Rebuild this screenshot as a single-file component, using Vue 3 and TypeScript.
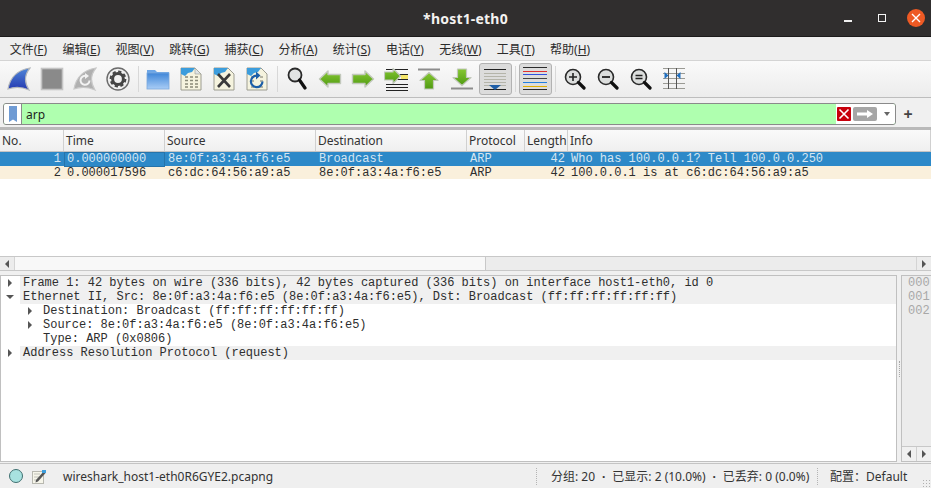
<script setup lang="ts">
interface MenuItem {
  label: string
  key: string
}

interface Packet {
  no: number
  time: string
  source: string
  destination: string
  protocol: string
  length: number
  info: string
}

interface DetailRow {
  text: string
  level: number
  arrow: 'right' | 'down' | 'none'
  shaded: boolean
}

const menus: MenuItem[] = [
  { label: '文件', key: 'F' },
  { label: '编辑', key: 'E' },
  { label: '视图', key: 'V' },
  { label: '跳转', key: 'G' },
  { label: '捕获', key: 'C' },
  { label: '分析', key: 'A' },
  { label: '统计', key: 'S' },
  { label: '电话', key: 'Y' },
  { label: '无线', key: 'W' },
  { label: '工具', key: 'T' },
  { label: '帮助', key: 'H' }
]

const columns = ['No.', 'Time', 'Source', 'Destination', 'Protocol', 'Length', 'Info']

const packets: Packet[] = [
  {
    no: 1,
    time: '0.000000000',
    source: '8e:0f:a3:4a:f6:e5',
    destination: 'Broadcast',
    protocol: 'ARP',
    length: 42,
    info: 'Who has 100.0.0.1? Tell 100.0.0.250'
  },
  {
    no: 2,
    time: '0.000017596',
    source: 'c6:dc:64:56:a9:a5',
    destination: '8e:0f:a3:4a:f6:e5',
    protocol: 'ARP',
    length: 42,
    info: '100.0.0.1 is at c6:dc:64:56:a9:a5'
  }
]

const details: DetailRow[] = [
  {
    text: 'Frame 1: 42 bytes on wire (336 bits), 42 bytes captured (336 bits) on interface host1-eth0, id 0',
    level: 0,
    arrow: 'right',
    shaded: true
  },
  {
    text: 'Ethernet II, Src: 8e:0f:a3:4a:f6:e5 (8e:0f:a3:4a:f6:e5), Dst: Broadcast (ff:ff:ff:ff:ff:ff)',
    level: 0,
    arrow: 'down',
    shaded: true
  },
  { text: 'Destination: Broadcast (ff:ff:ff:ff:ff:ff)', level: 1, arrow: 'right', shaded: false },
  { text: 'Source: 8e:0f:a3:4a:f6:e5 (8e:0f:a3:4a:f6:e5)', level: 1, arrow: 'right', shaded: false },
  { text: 'Type: ARP (0x0806)', level: 1, arrow: 'none', shaded: false },
  { text: 'Address Resolution Protocol (request)', level: 0, arrow: 'right', shaded: true }
]

// the pane is narrow, only the first three digits of each offset show
const offsets = ['000', '001', '002']
</script>

<template>
  <div class="window">
    <header class="titlebar">
      <span class="title">*host1-eth0</span>
      <div class="win-buttons">
        <span class="win-min"></span>
        <span class="win-max"></span>
        <span class="win-close">
          <svg width="18" height="18" viewBox="0 0 18 18">
            <path d="M5 5l8 8M13 5l-8 8" stroke="#fff" stroke-width="1.4" fill="none" />
          </svg>
        </span>
      </div>
    </header>

    <nav class="menubar">
      <span v-for="menu in menus" :key="menu.key" class="menu-item">{{ menu.label }}(<u>{{ menu.key }}</u>)</span>
    </nav>

    <div class="toolbar">
      <!-- capture -->
      <span class="tool">
        <svg width="24" height="24" viewBox="0 0 24 24">
          <defs>
            <linearGradient id="shark" x1="0" y1="0" x2="0" y2="1">
              <stop offset="0" stop-color="#4f86d8" />
              <stop offset="1" stop-color="#2438b0" />
            </linearGradient>
            <linearGradient id="go" x1="0" y1="0" x2="0" y2="1">
              <stop offset="0" stop-color="#86c832" />
              <stop offset="1" stop-color="#4f9a12" />
            </linearGradient>
          </defs>
          <path d="M1 22C3 11 10 3 23 1 18 7 17 15 22 23 15 20 7 20 1 22Z" fill="url(#shark)" stroke="#b4b8bc" stroke-width="1.2" />
        </svg>
      </span>
      <span class="tool">
        <svg width="24" height="24" viewBox="0 0 24 24">
          <rect x="1.5" y="1.5" width="21" height="21" fill="#8a8a8a" stroke="#c4c4c4" stroke-width="1.6" />
        </svg>
      </span>
      <span class="tool">
        <svg width="24" height="24" viewBox="0 0 24 24">
          <path d="M1 22C3 11 10 3 23 1 18 7 17 15 22 23 15 20 7 20 1 22Z" fill="#b0b0b0" stroke="#c8c8c8" stroke-width="1.2" />
          <path d="M16.5 13.5a4.5 4.5 0 1 1-3-4.4" stroke="#f2f2f2" stroke-width="2" fill="none" />
          <path d="M12 6l4 3-4 3Z" fill="#f2f2f2" />
        </svg>
      </span>
      <span class="tool">
        <svg width="24" height="24" viewBox="0 0 24 24">
          <circle cx="12" cy="12" r="11" fill="#f0f0f0" stroke="#6c6c6c" stroke-width="1.4" />
          <circle cx="12" cy="12" r="5.4" fill="none" stroke="#444" stroke-width="3" />
          <circle cx="12" cy="12" r="7.4" fill="none" stroke="#444" stroke-width="2" stroke-dasharray="3.3 2.5" />
        </svg>
      </span>
      <span class="tool-sep"></span>

      <!-- files -->
      <span class="tool">
        <svg width="24" height="22" viewBox="0 0 24 22">
          <defs>
            <linearGradient id="folder" x1="0" y1="0" x2="0" y2="1">
              <stop offset="0" stop-color="#3f86d8" />
              <stop offset="1" stop-color="#a9cdf6" />
            </linearGradient>
          </defs>
          <path d="M1 2h8l2 2h12v3H1Z" fill="#6da6e6" />
          <rect x="1" y="5" width="22" height="16" fill="url(#folder)" stroke="#7aa9dd" stroke-width="0.8" />
        </svg>
      </span>
      <span class="tool">
        <svg width="22" height="24" viewBox="0 0 22 24">
          <path d="M1 1h14l6 6v16H1Z" fill="#f5f3de" stroke="#9c9c90" />
          <path d="M1 1h14l-3 4-4 1-3 3-4-2Z" fill="#3c9ddc" />
          <path d="M15 1v6h6Z" fill="#dfe4e6" stroke="#9c9c90" stroke-width="0.6" />
          <path d="M5 10h3M10 10h3M15 10h3M5 13.5h3M10 13.5h3M15 13.5h3M5 17h3M10 17h3M15 17h3M5 20h3M10 20h3M15 20h3" stroke="#8a8a78" stroke-width="1.6" />
        </svg>
      </span>
      <span class="tool">
        <svg width="22" height="24" viewBox="0 0 22 24">
          <path d="M1 1h14l6 6v16H1Z" fill="#f5f3de" stroke="#9c9c90" />
          <path d="M1 1h14l-3 4-4 1-3 3-4-2Z" fill="#3c9ddc" />
          <path d="M5 7l12 13M17 7L5 20" stroke="#3a3a3a" stroke-width="2.6" />
        </svg>
      </span>
      <span class="tool">
        <svg width="22" height="24" viewBox="0 0 22 24">
          <path d="M1 1h14l6 6v16H1Z" fill="#f5f3de" stroke="#9c9c90" />
          <path d="M1 1h14l-3 4-4 1-3 3-4-2Z" fill="#3c9ddc" />
          <path d="M5 10h3M14 10h3M5 14h3M14 14h3M5 20h3M14 20h3" stroke="#a0a090" stroke-width="1.6" />
          <path d="M16.5 14.5A5.8 5.8 0 1 1 11 8.6" stroke="#1c5ea8" stroke-width="2.2" fill="none" />
          <path d="M10 4.5l4.5 4-4.5 4Z" fill="#1c5ea8" />
        </svg>
      </span>
      <span class="tool-sep"></span>

      <!-- find and go -->
      <span class="tool">
        <svg width="20" height="24" viewBox="0 0 20 24">
          <circle cx="8" cy="8" r="6.5" fill="#e2e4e4" stroke="#2a2a2a" stroke-width="1.8" />
          <path d="M12.5 13L18 21" stroke="#111" stroke-width="3.2" stroke-linecap="round" />
        </svg>
      </span>
      <span class="tool">
        <svg width="24" height="18" viewBox="0 0 24 18">
          <path d="M1.5 9L10 1V4.5H22.5V13.5H10V17Z" fill="url(#go)" stroke="#c2c8bc" stroke-width="1.4" stroke-linejoin="round" />
        </svg>
      </span>
      <span class="tool">
        <svg width="24" height="18" viewBox="0 0 24 18">
          <path d="M22.5 9L14 1V4.5H1.5V13.5H14V17Z" fill="url(#go)" stroke="#c2c8bc" stroke-width="1.4" stroke-linejoin="round" />
        </svg>
      </span>
      <span class="tool">
        <svg width="24" height="24" viewBox="0 0 24 24">
          <path d="M2 2.5h22M8 7.5h16M8 12.5h16M2 17.5h22M2 20.5h22M2 23.5h22" stroke="#222" stroke-width="1" />
          <rect x="17" y="8" width="7" height="4" fill="#f5e66a" />
          <path d="M16.5 9L9 1.5V5H0.5V13H9V16.5Z" fill="url(#go)" stroke="#c2c8bc" stroke-width="1.2" stroke-linejoin="round" />
        </svg>
      </span>
      <span class="tool">
        <svg width="22" height="22" viewBox="0 0 22 22">
          <path d="M0 1.5h22" stroke="#8c8c8c" stroke-width="2" />
          <path d="M11 4.5L20 12.5H15.5V21H6.5V12.5H2Z" fill="url(#go)" stroke="#c2c8bc" stroke-width="1.2" stroke-linejoin="round" />
        </svg>
      </span>
      <span class="tool">
        <svg width="22" height="22" viewBox="0 0 22 22">
          <path d="M0 20.5h22" stroke="#8c8c8c" stroke-width="2" />
          <path d="M11 17.5L20 9.5H15.5V1H6.5V9.5H2Z" fill="url(#go)" stroke="#c2c8bc" stroke-width="1.2" stroke-linejoin="round" />
        </svg>
      </span>
      <span class="tool tool-on">
        <svg width="24" height="24" viewBox="0 0 24 24">
          <path d="M1 2.5h22M1 22.5h22" stroke="#222" stroke-width="1" />
          <path d="M1 6.5h22M1 9.5h22M1 12.5h22M1 15.5h22M1 18.5h22" stroke="#b4b4aa" stroke-width="1" />
          <path d="M6 18h12l-6 5Z" fill="#1f5fa8" />
        </svg>
      </span>
      <span class="tool-sep"></span>
      <span class="tool tool-on">
        <svg width="24" height="24" viewBox="0 0 24 24">
          <path d="M0 0.5h24M0 22.5h24" stroke="#2a2a2a" stroke-width="1" />
          <path d="M0 4.5h24" stroke="#e03030" stroke-width="1" />
          <path d="M0 7.5h24" stroke="#3050e0" stroke-width="1" />
          <path d="M0 11.5h24" stroke="#444" stroke-width="1" />
          <path d="M0 15.5h24" stroke="#1f7fe0" stroke-width="1" />
          <path d="M0 19.5h24" stroke="#e0b000" stroke-width="1" />
        </svg>
      </span>
      <span class="tool-sep"></span>

      <!-- zoom -->
      <span class="tool">
        <svg width="22" height="22" viewBox="0 0 22 22">
          <circle cx="9" cy="9" r="7.5" fill="#dcdedd" stroke="#2a2a2a" stroke-width="1.6" />
          <path d="M14.5 14.5L20 20" stroke="#111" stroke-width="3.2" stroke-linecap="round" />
          <path d="M5 9h8M9 5v8" stroke="#222" stroke-width="1.6" />
        </svg>
      </span>
      <span class="tool">
        <svg width="22" height="22" viewBox="0 0 22 22">
          <circle cx="9" cy="9" r="7.5" fill="#dcdedd" stroke="#2a2a2a" stroke-width="1.6" />
          <path d="M14.5 14.5L20 20" stroke="#111" stroke-width="3.2" stroke-linecap="round" />
          <path d="M5 9h8" stroke="#222" stroke-width="1.8" />
        </svg>
      </span>
      <span class="tool">
        <svg width="22" height="22" viewBox="0 0 22 22">
          <circle cx="9" cy="9" r="7.5" fill="#dcdedd" stroke="#2a2a2a" stroke-width="1.6" />
          <path d="M14.5 14.5L20 20" stroke="#111" stroke-width="3.2" stroke-linecap="round" />
          <path d="M5.5 7.5h7M5.5 10.5h7" stroke="#222" stroke-width="1.4" />
        </svg>
      </span>
      <span class="tool">
        <svg width="22" height="22" viewBox="0 0 22 22">
          <path d="M0 0.5h22M0 5.5h22M0 10.5h22M0 15.5h22M0 20.5h22" stroke="#9a9a94" stroke-width="1" />
          <path d="M5.5 0v21M13.5 0v21" stroke="#555" stroke-width="1" />
          <path d="M1.5 4l4 3.5-4 3.5ZM17.5 4l-4 3.5 4 3.5Z" fill="#1f6fc0" />
        </svg>
      </span>
    </div>

    <div class="filterbar">
      <div class="filter-box">
        <span class="bookmark">
          <svg width="10" height="18" viewBox="0 0 10 18">
            <path d="M1 1h8v16L5 14.5 1 17Z" fill="#6f9bd4" />
          </svg>
        </span>
        <span class="filter-text">arp</span>
        <span class="filter-clear">
          <svg width="14" height="14" viewBox="0 0 14 14">
            <rect width="14" height="14" rx="1" fill="#c8000c" />
            <path d="M2.5 2.5l9 9M11.5 2.5l-9 9" stroke="#fff" stroke-width="1.6" />
          </svg>
        </span>
        <span class="filter-apply">
          <svg width="24" height="14" viewBox="0 0 24 14">
            <rect width="24" height="14" rx="2" fill="#a6a6a6" />
            <path d="M4 5.5h10V3l6 4-6 4V8.5H4Z" fill="#fff" />
          </svg>
        </span>
        <span class="filter-drop"><i class="drop-tri"></i></span>
      </div>
      <span class="filter-plus">+</span>
    </div>

    <section class="packet-list">
      <div class="list-head">
        <span v-for="col in columns" :key="col" class="head-cell">{{ col }}</span>
      </div>
      <div class="list-body">
        <div
          v-for="(p, i) in packets"
          :key="p.no"
          class="packet-row"
          :class="i === 0 ? 'row-selected' : 'row-plain'"
        >
          <span class="cell cell-num">{{ p.no }}</span>
          <span class="cell">{{ p.time }}</span>
          <span class="cell">{{ p.source }}</span>
          <span class="cell">{{ p.destination }}</span>
          <span class="cell">{{ p.protocol }}</span>
          <span class="cell cell-num">{{ p.length }}</span>
          <span class="cell">{{ p.info }}</span>
        </div>
      </div>
      <div class="hscroll">
        <span class="scroll-btn"><i class="tri-left"></i></span>
        <span class="scroll-track"><span class="scroll-thumb"></span></span>
        <span class="scroll-btn"><i class="tri-right"></i></span>
      </div>
    </section>

    <section class="bottom-panes">
      <div class="detail-pane">
        <div
          v-for="row in details"
          :key="row.text"
          class="detail-row"
          :class="[{ shaded: row.shaded }, row.level ? 'level-1' : 'level-0']"
        >
          <span class="arrow-slot">
            <i v-if="row.arrow === 'right'" class="tri-right"></i>
            <i v-else-if="row.arrow === 'down'" class="tri-down"></i>
          </span>
          <span class="detail-text">{{ row.text }}</span>
        </div>
      </div>
      <div class="splitter"><i class="splitter-dots"></i></div>
      <div class="bytes-pane">
        <div class="bytes-text">
          <div v-for="o in offsets" :key="o">{{ o }}</div>
        </div>
        <div class="bytes-scroll">
          <span class="scroll-btn"><i class="tri-left"></i></span>
          <span class="scroll-btn scroll-btn-end"><i class="tri-right"></i></span>
        </div>
      </div>
    </section>

    <footer class="statusbar">
      <span class="led"></span>
      <span class="note-icon">
        <svg width="15" height="15" viewBox="0 0 15 15">
          <rect x="0.5" y="2.5" width="11" height="12" fill="#f6f5ea" stroke="#b8b8b0" />
          <path d="M2 5h6M2 8h5M2 11h4" stroke="#c0c0b8" stroke-width="1" />
          <path d="M4 11l8-9 2 1.5-8 9-2.5 1Z" fill="#555" />
          <path d="M10 1h4v3h-4Z" fill="#3c9ddc" />
        </svg>
      </span>
      <span class="file-name">wireshark_host1-eth0R6GYE2.pcapng</span>
      <span class="stat-sep"></span>
      <span class="stats">分组: 20 <span class="dot">·</span> 已显示: 2 (10.0%) <span class="dot">·</span> 已丢弃: 0 (0.0%)</span>
      <span class="stat-sep"></span>
      <span class="profile">配置：Default</span>
      <i class="grip"></i>
    </footer>
  </div>
</template>

<style scoped>
.window {
  width: 931px;
  height: 488px;
  display: flex;
  flex-direction: column;
  overflow: hidden;
  background: #f0f0f0;
  font-family: "Noto Sans", "Noto Sans CJK SC", sans-serif;
  font-size: 12px;
  color: #2e2e2e;
}

.titlebar {
  height: 37px;
  flex: none;
  display: flex;
  align-items: center;
  justify-content: center;
  position: relative;
  background: #302e2e;
  border-bottom: 1px solid #1c1b1b;
  box-sizing: border-box;
}

.title {
  color: #f4f2f0;
  font-size: 14px;
  font-weight: 700;
  letter-spacing: 0.2px;
}

.win-buttons {
  position: absolute;
  right: 6px;
  top: 9px;
  display: flex;
  align-items: center;
}

.win-min {
  width: 8px;
  height: 1px;
  margin-top: 6px;
  background: #f0f0f0;
  border-bottom: 1px solid #f0f0f0;
}

.win-max {
  width: 6px;
  height: 6px;
  margin-left: 26px;
  border: 1px solid #f4f4f4;
}

.win-close {
  width: 18px;
  height: 18px;
  margin-left: 21px;
  border-radius: 50%;
  background: #ee5a24;
  display: flex;
}

.menubar {
  height: 23px;
  flex: none;
  display: flex;
  align-items: center;
  padding-left: 2px;
  background: #eeeeee;
  box-sizing: border-box;
}

.menu-item {
  padding: 0 7.65px;
  white-space: nowrap;
  font-size: 12px;
  color: #2b2b2b;
}

.toolbar {
  height: 38px;
  flex: none;
  display: flex;
  align-items: center;
  padding: 0 0 0 2.5px;
  box-sizing: border-box;
  background: linear-gradient(#fafafa, #ececec);
  border-top: 1px solid #d4d4d4;
  border-bottom: 1px solid #bdbdbd;
}

.tool {
  width: 33px;
  height: 32px;
  flex: none;
  display: flex;
  align-items: center;
  justify-content: center;
  box-sizing: border-box;
}

.tool-on {
  background: #dcdcdc;
  border: 1px solid #b2b2b2;
  border-radius: 3px;
}

.tool-sep {
  width: 7px;
  height: 26px;
  flex: none;
  background: linear-gradient(#d8d8d8, #d8d8d8) center / 1px 100% no-repeat;
}

.filterbar {
  height: 32px;
  flex: none;
  display: flex;
  align-items: center;
  padding: 3px 13px 0 3px;
  box-sizing: border-box;
  background: #f0f0f0;
  border-bottom: 3px solid #b9b9b9;
}

.filter-box {
  flex: 1;
  height: 22px;
  display: flex;
  align-items: center;
  background: #afffaf;
  border: 1px solid #8a8a8a;
  border-radius: 3px;
  overflow: hidden;
  box-sizing: border-box;
}

.bookmark {
  width: 18px;
  height: 100%;
  flex: none;
  display: flex;
  align-items: center;
  justify-content: center;
  background: #fff;
  border-right: 1px solid #8a8a8a;
  box-sizing: border-box;
}

.filter-text {
  flex: 1;
  padding-left: 4px;
  font-size: 12px;
  color: #1e1e1e;
}

.filter-clear {
  width: 15px;
  height: 100%;
  flex: none;
  display: flex;
  align-items: center;
  justify-content: center;
  background: #fff;
}

.filter-apply {
  width: 27px;
  height: 100%;
  flex: none;
  display: flex;
  align-items: center;
  justify-content: center;
  background: #fff;
}

.filter-drop {
  width: 17px;
  height: 100%;
  flex: none;
  display: flex;
  align-items: center;
  justify-content: center;
  background: #fff;
}

.drop-tri {
  display: block;
  width: 0;
  height: 0;
  border-left: 3px solid transparent;
  border-right: 3px solid transparent;
  border-top: 4px solid #666;
}

.filter-plus {
  width: 20px;
  text-align: center;
  margin-left: 2px;
  font-size: 16px;
  font-weight: 700;
  color: #444;
  line-height: 20px;
}

.packet-list {
  height: 141px;
  flex: none;
  display: flex;
  flex-direction: column;
  background: #fff;
  border-bottom: 4px solid #f0f0f0;
}

.list-head,
.packet-row {
  display: grid;
  grid-template-columns: 64px 101px 151px 151px 58px 43px 1fr;
}

.list-head {
  height: 22px;
  flex: none;
  background: linear-gradient(#fafafa, #efefef);
  border-bottom: 1px solid #c4c4c4;
  box-sizing: border-box;
}

.head-cell {
  padding-left: 2px;
  line-height: 21px;
  font-size: 12px;
  color: #333;
  border-right: 1px solid #d0d0d0;
}

.list-body {
  flex: 1;
  min-height: 0;
}

.packet-row {
  height: 13.5px;
  font-family: "Liberation Mono", monospace;
  font-size: 12px;
  line-height: 15px;
}

.row-selected {
  background: #2d89c8;
  color: #d6e6f2;
}

.row-selected .cell:nth-child(2) {
  box-shadow: inset 0 0 0 1px #2674aa;
}

.row-plain {
  background: #faf0dc;
  color: #2e2e2e;
}

.cell {
  padding-left: 3px;
  white-space: nowrap;
}

.cell-num {
  padding: 0 3px 0 0;
  text-align: right;
}

.hscroll {
  height: 15px;
  flex: none;
  display: flex;
  background: #ececec;
  border-top: 1px solid #c8c8c8;
  border-bottom: 1px solid #c8c8c8;
  box-sizing: border-box;
}

.scroll-btn {
  width: 14px;
  flex: none;
  display: flex;
  align-items: center;
  justify-content: center;
}

.scroll-btn-end {
  border-left: 1px solid #d0d0d0;
}

.scroll-track {
  flex: 1;
  display: flex;
  border-left: 1px solid #d4d4d4;
  border-right: 1px solid #d4d4d4;
}

.scroll-thumb {
  width: 470px;
  background: #f8f8f8;
  border-right: 1px solid #c8c8c8;
}

.tri-left,
.tri-right {
  display: block;
  width: 0;
  height: 0;
  border-top: 4px solid transparent;
  border-bottom: 4px solid transparent;
}

.tri-left {
  border-right: 4px solid #555;
}

.tri-right {
  border-left: 4px solid #555;
}

.tri-down {
  display: block;
  width: 0;
  height: 0;
  border-left: 4px solid transparent;
  border-right: 4px solid transparent;
  border-top: 4px solid #555;
}

.bottom-panes {
  flex: 1;
  min-height: 0;
  display: flex;
  background: #f0f0f0;
}

.detail-pane {
  flex: 1;
  min-width: 0;
  background: #fff;
  border: 1px solid #c0c0c0;
  margin-bottom: 1px;
  box-sizing: border-box;
}

.detail-row {
  height: 14px;
  display: flex;
  align-items: center;
  font-family: "Liberation Mono", monospace;
  font-size: 12px;
  letter-spacing: -0.012px;
  color: #2e2e2e;
  white-space: nowrap;
}

.level-1 {
  padding-left: 20px;
}

.arrow-slot {
  width: 17px;
  height: 100%;
  flex: none;
  margin-right: 2px;
  display: flex;
  align-items: center;
  justify-content: center;
}

.detail-text {
  padding-left: 3px;
}

.shaded .detail-text {
  flex: 1;
  background: #f0f0f0;
  line-height: 14px;
}

.splitter {
  width: 4px;
  flex: none;
  display: flex;
  align-items: center;
  justify-content: center;
}

.splitter-dots {
  display: block;
  height: 16px;
  border-left: 1px dotted #a8a8a8;
}

.bytes-pane {
  width: 30px;
  flex: none;
  display: flex;
  flex-direction: column;
  margin-bottom: 1px;
  background: #ececec;
  border: 1px solid #c0c0c0;
  border-right: none;
  box-sizing: border-box;
}

.bytes-text {
  flex: 1;
  padding-left: 6px;
  font-family: "Liberation Mono", monospace;
  font-size: 12px;
  line-height: 14px;
  color: #a8a8a8;
}

.bytes-scroll {
  height: 14px;
  flex: none;
  display: flex;
  background: #f0f0f0;
  border-top: 1px solid #c8c8c8;
}

.statusbar {
  height: 25px;
  flex: none;
  display: flex;
  align-items: center;
  padding-left: 9px;
  position: relative;
  box-sizing: border-box;
  background: #efefef;
  border-top: 1px solid #c4c4c4;
  font-size: 12px;
  color: #333;
}

.led {
  width: 14px;
  height: 14px;
  flex: none;
  border-radius: 50%;
  background: #a8e2e0;
  border: 1px solid #3f6f70;
  box-sizing: border-box;
}

.note-icon {
  width: 15px;
  height: 15px;
  margin-left: 9px;
  flex: none;
  display: flex;
}

.file-name {
  width: 473px;
  margin-left: 16px;
  flex: none;
  white-space: nowrap;
}

.stat-sep {
  width: 1px;
  height: 17px;
  flex: none;
  border-left: 1px dotted #b4b4b4;
}

.stats {
  width: 266px;
  flex: none;
  margin-left: 13px;
  white-space: nowrap;
}

.dot {
  display: inline-block;
  width: 11px;
  text-align: center;
  font-weight: 700;
}

.profile {
  margin-left: 11px;
  white-space: nowrap;
}

.grip {
  position: absolute;
  right: 1px;
  bottom: 1px;
  width: 8px;
  height: 8px;
  background: radial-gradient(circle, #b0b0b0 0.7px, transparent 0.9px) 0 0 / 3px 3px;
}
</style>

<style>
html,
body {
  margin: 0;
  background: #f0f0f0;
}
</style>
